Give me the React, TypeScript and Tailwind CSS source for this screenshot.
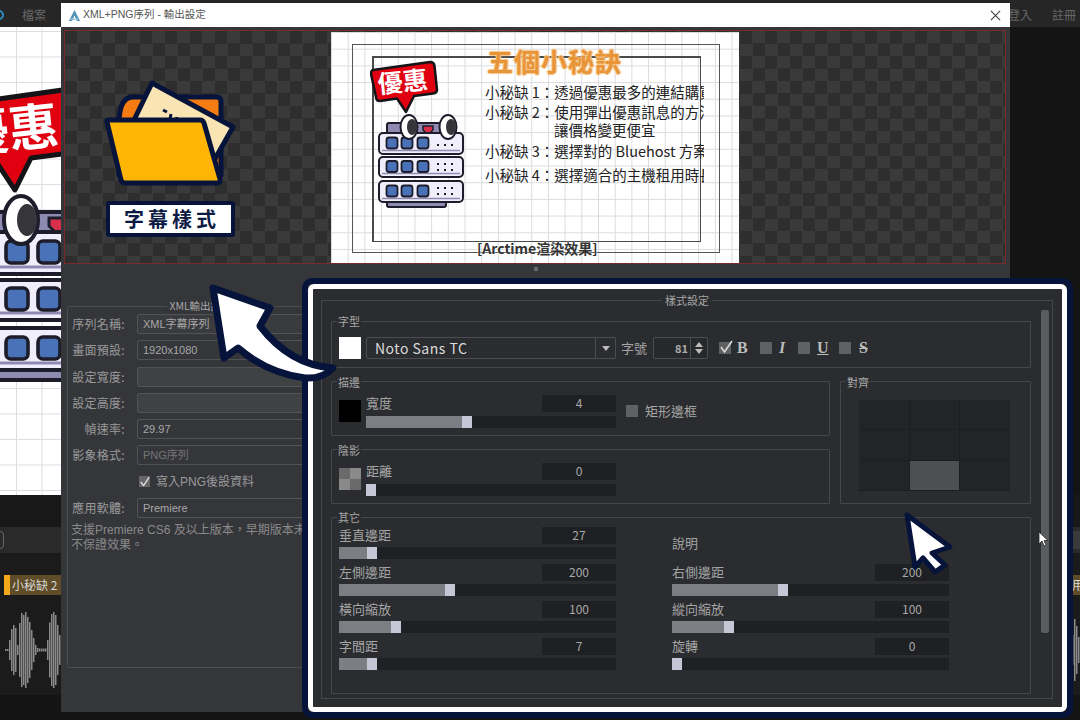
import React from "react";

const CJK = { fontFamily: '"Noto Sans CJK TC", "Noto Sans", sans-serif' };
const LATIN = { fontFamily: '"Liberation Sans", "Noto Sans CJK TC", sans-serif' };
const NAVY = "#06133a";

function Illustration({ className }: { className: string }) {
  const dark = "#1c1c2b";
  const rows = [
    { y: 73, h: 21 },
    { y: 97, h: 20 },
    { y: 121, h: 21 },
  ];
  return (
    <svg viewBox="0 0 100 150" className={className}>
      <path d="M3 10 L60 2 Q64 2 64.500 6 L67 30 Q67 33 63 33.500 L44 36 L36 52 L27 38.500 L10 41 Q6 41 6 37 L1 14 Q1 10 3 10 Z" fill="#e00010" stroke="#141418" strokeWidth="2.500" strokeLinejoin="round" />
      <text x="33" y="31" textAnchor="middle" fontSize="25" fontWeight="700" fill="#fff" transform="rotate(-6 33 24)" style={CJK}>優惠</text>
      <rect x="17" y="63" width="53" height="14" rx="2" fill="#8f8ab2" stroke={dark} strokeWidth="2" />
      <path d="M53 66 h10 v4 l-5 5 l-5 -5 z" fill="#d8304a" stroke={dark} strokeWidth="1.500" />
      <rect x="17" y="140" width="59" height="7" rx="2" fill="#8f8ab2" stroke={dark} strokeWidth="2" />
      {rows.map((r, i) => (
        <g key={r.y}>
          <rect x="9" y={r.y} width="84" height={r.h} rx="4" fill="#efeefa" stroke={dark} strokeWidth="2" />
          <path d={`M12 ${r.y + r.h - 3.5} H90`} stroke="#8f8ab2" strokeWidth="1.500" />
          {[22, 37, 53].map((x) => (
            <rect key={x} x={x - 5.5} y={r.y + r.h / 2 - 6} width="11" height="11" rx="2.500" fill="#4a72b8" stroke={dark} strokeWidth="1.800" />
          ))}
          {[68, 75, 82].map((x) => (
            <g key={x}>
              <rect x={x - 1} y={r.y + (i === 0 ? 11 : 6)} width="2" height="2" fill={dark} />
              {i > 0 && <rect x={x - 1} y={r.y + 12} width="2" height="2" fill={dark} />}
            </g>
          ))}
        </g>
      ))}
      {[39, 78].map((x) => (
        <g key={x}>
          <ellipse cx={x} cy="67" rx="8.500" ry="12" fill="#fff" stroke={dark} strokeWidth="2" />
          <ellipse cx={x + 3} cy="67" rx="5" ry="8" fill="#35353a" />
        </g>
      ))}
    </svg>
  );
}

function Waveform({ bars, className }: { bars: number[]; className: string }) {
  return (
    <svg viewBox={`0 0 ${bars.length * 2} 90`} className={className}>
      {bars.map((h, i) => (
        <rect key={i} x={i * 2} y={45 - h / 2} width="1.500" height={h} fill="#8a8a8a" />
      ))}
    </svg>
  );
}

function Background() {
  return (
    <div className="flex h-[720px] w-[1080px] flex-col bg-[#141414]" style={CJK}>
      <div className="flex h-[27px] shrink-0 items-center justify-between bg-[#262626] pt-[2px] text-[12px] text-[#666]">
        <div className="flex items-center">
          <span className="-ml-[3px] h-[10px] w-[7px] rounded-r-full border-2 border-[#2f86bf]" />
          <span className="ml-[18px]">檔案</span>
        </div>
        <div className="flex gap-[20px] pr-[4px]">
          <span>登入</span>
          <span>註冊</span>
        </div>
      </div>
      <div className="flex h-[468px] shrink-0">
        <div className="relative w-[62px] overflow-hidden bg-white bg-[linear-gradient(#dedee2_1px,transparent_1px),linear-gradient(90deg,#dedee2_1px,transparent_1px)] bg-[length:25.500px_25.500px] bg-[position:16px_4px]">
          <div className="absolute -left-[57px] top-[59px] h-[300px] w-[200px]">
            <Illustration className="h-full w-full" />
          </div>
        </div>
      </div>
      <div className="h-[32px] shrink-0 bg-[#181818]" />
      <div className="flex h-[26px] shrink-0 items-center justify-between bg-[#2a2a2a]">
        <span className="-ml-[6px] h-[18px] w-[10px] rounded border border-[#666]" />
        <span className="h-[18px] w-[8px] bg-[#3a3a3a]" />
      </div>
      <div className="flex h-[52px] shrink-0 items-end justify-between bg-[#1b1b1b] pb-[10px]">
        <div className="ml-[4px] flex h-[20px] w-[60px] items-center border-l-[6px] border-[#f4a81c] bg-[#5f4c28] pl-[2px] text-[12px] text-[#d8d8d8]">小秘缺 2</div>
        <div className="flex h-[20px] w-[8px] items-center overflow-hidden bg-[#5f4c28] text-[12px] text-[#d8d8d8]">用</div>
      </div>
      <div className="flex h-[90px] shrink-0 items-center justify-between bg-[#1b1b1b] pl-[5px]">
        <Waveform className="h-[90px] w-[56px] blur-[0.4px]" bars={[2, 2, 20, 42, 50, 44, 10, 54, 74, 70, 76, 66, 56, 40, 24, 10, 4, 3, 3, 3, 3, 20, 55, 72, 76, 70, 50, 30]} />
        <Waveform className="h-[90px] w-[8px] blur-[0.4px]" bars={[30, 62, 48, 26]} />
      </div>
    </div>
  );
}

function Slide() {
  const lines: [string, boolean][] = [
    ["小秘缺 1：透過優惠最多的連結購買", false],
    ["小秘缺 2：使用彈出優惠訊息的方法", false],
    ["讓價格變更便宜", true],
    ["小秘缺 3：選擇對的 Bluehost 方案", false],
    ["小秘缺 4：選擇適合的主機租用時長", false],
  ];
  const tops = ["mt-0", "mt-[4px]", "mt-[2px]", "mt-[5px]", "mt-[8px]"];
  return (
    <div className="relative flex h-[231px] w-[408px] bg-white bg-[linear-gradient(#dcdce0_1px,transparent_1px),linear-gradient(90deg,#dcdce0_1px,transparent_1px)] bg-[length:16.700px_16.700px]" style={CJK}>
      <div className="absolute left-[21px] top-[12px] h-[209px] w-[368px] border border-[#555]" />
      <div className="absolute left-[41px] top-[24px] h-[186px] w-[329px] border-l-2 border-t-2 border-b border-r border-[#4a4a4a]" />
      <Illustration className="relative ml-[39px] mt-[28px] h-[150px] w-[100px] shrink-0" />
      <div className="relative ml-[15px] flex w-[219px] flex-col overflow-hidden pt-[14px]">
        <div className="ml-[2px] text-[26px] leading-[30px] font-bold tracking-[1px] text-[#e8953a] [text-shadow:1px_0_1px_#f7c98d,-1px_0_1px_#f7c98d,0_1px_1px_#f7c98d,0_-1px_1px_#f7c98d]">五個小秘訣</div>
        <div className="mt-[8px] flex flex-col text-[14.500px] leading-[16px] whitespace-nowrap text-[#222]">
          {lines.map(([t, indent], i) => (
            <div key={t} className={`${tops[i]} ${indent ? "pl-[69px]" : ""}`}>{t}</div>
          ))}
        </div>
      </div>
      <div className="absolute bottom-[7px] left-[146px] text-[14px] leading-[15px] font-bold whitespace-nowrap text-[#333] [text-shadow:0_0_2px_#fff]">[Arctime渲染效果]</div>
    </div>
  );
}

function FolderBadge() {
  return (
    <div className="absolute left-[34px] top-[49px] flex w-[140px] flex-col items-center" style={CJK}>
      <svg viewBox="0 0 140 110" className="h-[110px] w-[140px]">
        <path d="M20 44 Q20 17 34 17 H118 Q122 17 122 22 V95 H20 Z" fill="#f57c13" stroke={NAVY} strokeWidth="5" strokeLinejoin="round" />
        <path d="M53 3 L134 47 L104 100 L35 40 Z" fill="#f9e4b4" stroke={NAVY} strokeWidth="5" strokeLinejoin="round" />
        <path d="M64 30 l4 2 M72 34 l-1 5 M78 37 l-1 6 M84 41 l-1 5" stroke={NAVY} strokeWidth="3" />
        <path d="M8 42 Q7 40 10 40 H101 Q104 40 105 43 L121 99 Q122 103 118 103 H26 Q23 103 22 100 Z" fill="#ffb406" stroke={NAVY} strokeWidth="5" strokeLinejoin="round" />
      </svg>
      <div className="ml-[2px] mt-[11px] flex h-[36px] w-[129px] items-center justify-center rounded-[3px] border-[4px] border-[#06133a] bg-white pl-[4px] text-[20px] font-bold tracking-[4px] text-[#0c1a44]">字幕樣式</div>
    </div>
  );
}

function FormRow({ label, value, tone }: { label: string; value: string; tone: "field" | "dark" | "num" | "dim" }) {
  const box = {
    field: "bg-[#35363a] text-[#a8a8a8] pl-[5px] text-[11px]",
    dark: "bg-[#3a3b3e] text-[#a8a8a8] pl-[5px] text-[11px]",
    num: "bg-[#3f4243] text-[#bdbdbd] justify-end pr-[2px] font-bold text-[10px]",
    dim: "bg-[#35363a] text-[#757575] pl-[5px] text-[11px]",
  }[tone];
  return (
    <div className="flex h-[20px] items-center gap-[12px]">
      <span className="w-[54px] text-right text-[12px] tracking-[0.300px] whitespace-nowrap text-[#9a9a9a]">{label}</span>
      <div className={`flex h-[20px] flex-1 items-center rounded-[2px] border border-[#525356] ${box}`} style={LATIN}>{value}</div>
    </div>
  );
}

function Dialog() {
  return (
    <div className="absolute left-[61px] top-[3px] flex h-[709px] w-[949px] flex-col bg-[#35363a]" style={CJK}>
      <div className="flex h-[24px] shrink-0 items-center justify-between bg-white pl-[7px] pr-[9px]">
        <div className="flex items-center gap-[2px] text-[10.500px] text-[#555]" style={LATIN}>
          <svg viewBox="0 0 14 14" className="h-[13px] w-[13px]">
            <path d="M7 1 L13 13 H9.500 L7 7 L4.500 13 H1 Z" fill="#4f93b8" />
            <path d="M3 11 H11" stroke="#9ccbe0" strokeWidth="1.500" />
          </svg>
          <span>XML+PNG序列 - 輸出設定</span>
        </div>
        <svg viewBox="0 0 12 12" className="h-[11px] w-[11px]">
          <path d="M1 1 L11 11 M11 1 L1 11" stroke="#444" strokeWidth="1.300" />
        </svg>
      </div>
      <div className="relative ml-[3px] mt-[3px] flex h-[234px] w-[942px] shrink-0 justify-center border border-[#7a2a2a] bg-[#333] bg-[repeating-conic-gradient(#3a3a3a_0_25%,#2e2e2e_0_50%)] bg-[length:25px_25px] pt-px">
        <Slide />
        <FolderBadge />
      </div>
      <div className="mt-[3px] flex h-[4px] shrink-0 justify-center">
        <span className="h-[4px] w-[4px] bg-[#666]" />
      </div>
      <fieldset className="ml-[6px] mt-[28px] h-[369px] w-[270px] shrink-0 rounded-[2px] border border-[#4c4d50] pl-[3px] pr-[6px]">
        <legend className="mx-auto px-[2px] text-[10.500px] leading-[14px] text-[#a8a8a8]">XML輸出設定</legend>
        <div className="flex flex-col gap-[6.300px] pt-px">
          <FormRow label="序列名稱:" value="XML字幕序列" tone="dark" />
          <FormRow label="畫面預設:" value="1920x1080" tone="field" />
          <FormRow label="設定寬度:" value="1,920" tone="num" />
          <FormRow label="設定高度:" value="1,080" tone="num" />
          <FormRow label="幀速率:" value="29.97" tone="field" />
          <FormRow label="影象格式:" value="PNG序列" tone="dim" />
          <div className="flex h-[20px] items-center pl-[68px] text-[12px] text-[#9a9a9a]" style={LATIN}>
            <span className="mr-[6px] flex h-[11px] w-[11px] items-center justify-center bg-[#666]">
              <svg viewBox="0 0 12 12" className="h-[12px] w-[12px]"><path d="M2 6 L5 10 L11 1" fill="none" stroke="#ddd" strokeWidth="1.500" /></svg>
            </span>
            寫入PNG後設資料
          </div>
          <FormRow label="應用軟體:" value="Premiere" tone="field" />
        </div>
        <p className="mt-[5px] text-[12px] leading-[15px] whitespace-nowrap text-[#8a8a8a]" style={LATIN}>
          支援Premiere CS6 及以上版本，早期版本未
          <br />
          不保證效果。
        </p>
      </fieldset>
    </div>
  );
}

function Slider({ thumb, className = "" }: { thumb: number; className?: string }) {
  return (
    <div className={`flex h-[12px] bg-[#1f2023] ${className}`}>
      <div className="h-full bg-[#7d7e84]" style={{ width: thumb }} />
      <div className="h-full w-[9.500px] bg-[#c5c6d6]" />
    </div>
  );
}

function ValueBox({ value }: { value: string }) {
  return <span className="flex h-[17px] w-[74px] items-center justify-center bg-[#1f2023] pb-px text-[12px] text-[#a8a8a8]">{value}</span>;
}

function ValueRow({ label, value, thumb }: { label: string; value: string; thumb: number }) {
  return (
    <div className="flex h-[32px] flex-col">
      <div className="flex h-[17px] items-center justify-between">
        <span className="pb-[2px] text-[13px] text-[#a5a5a5]">{label}</span>
        <ValueBox value={value} />
      </div>
      <Slider thumb={thumb} className="mt-[3px]" />
    </div>
  );
}

function Swatch({ children, className }: { children?: React.ReactNode; className: string }) {
  return <div className={`h-[22px] w-[22px] shrink-0 ${className}`}>{children}</div>;
}

function SoloRow({ label, value, thumb }: { label: string; value: string; thumb: number }) {
  return (
    <div className="w-[250px]">
      <div className="flex h-[17px] items-center justify-between">
        <span className="text-[13px] text-[#a5a5a5]">{label}</span>
        <ValueBox value={value} />
      </div>
      <Slider thumb={thumb} className="mt-[4px]" />
    </div>
  );
}

function Group({ title, className, children }: { title: string; className: string; children: React.ReactNode }) {
  return (
    <fieldset className={`rounded-[1px] border border-[#45484b] px-[7px] ${className}`}>
      <legend className="-ml-[2px] px-px text-[11px] leading-[14px] text-[#a5a5a5]">{title}</legend>
      {children}
    </fieldset>
  );
}

function Check({ checked }: { checked?: boolean }) {
  return (
    <span className="relative flex h-[12px] w-[12px] shrink-0 items-center justify-center bg-[#5f6062]">
      {checked && (
        <svg viewBox="0 0 14 14" className="absolute -top-[2px] left-0 h-[14px] w-[14px]">
          <path d="M2 7 L5.500 12 L13 1" fill="none" stroke="#e0e0e0" strokeWidth="1.500" />
        </svg>
      )}
    </span>
  );
}

function Panel() {
  const serif = { fontFamily: '"Liberation Serif", serif' };
  return (
    <div className="absolute left-[302px] top-[278px] h-[440px] w-[771px] rounded-[10px] border-[6px] border-[#06133a]" style={CJK}>
      <div className="h-full w-full rounded-[6px] border-[5px] border-white bg-[#2a2c2f] pl-[8px] pr-[10px] pt-[4px]">
        <fieldset className="h-[406px] border border-[#45484b] pl-[9px] pr-[3px]">
          <legend className="ml-[331px] px-[3px] text-[11px] leading-[14px] text-[#a5a5a5]">樣式設定</legend>
          <div className="flex pt-[7px]">
            <div className="flex w-[700px] shrink-0 flex-col gap-[6.500px]">
              <Group title="字型" className="h-[54px]">
                <div className="flex items-center pt-[8px]">
                  <Swatch className="bg-white" />
                  <div className="ml-[5px] flex h-[22px] w-[250px] items-center justify-between rounded-[2px] border border-[#4b4d50] pl-[8px] text-[14px] tracking-[0.500px] text-[#dcdcdc]">
                    Noto Sans TC
                    <span className="flex h-full w-[20px] items-center justify-center border-l border-[#4b4d50]">
                      <span className="h-0 w-0 border-x-[4px] border-t-[5px] border-x-transparent border-t-[#bbb]" />
                    </span>
                  </div>
                  <span className="ml-[5px] text-[13px] text-[#a5a5a5]">字號</span>
                  <div className="ml-[6px] flex h-[22px] w-[55px] items-center rounded-[2px] border border-[#4b4d50] bg-[#26282a] text-[11px] font-bold text-[#aaa]">
                    <span className="w-[34px] text-right">81</span>
                    <span className="ml-[2px] flex h-full flex-1 flex-col items-center justify-center gap-[2px] border-l border-[#4b4d50]">
                      <span className="h-0 w-0 border-x-[4px] border-b-[5px] border-x-transparent border-b-[#bbb]" />
                      <span className="h-0 w-0 border-x-[4px] border-t-[5px] border-x-transparent border-t-[#bbb]" />
                    </span>
                  </div>
                  <div className="ml-[11px] flex items-center text-[16px] font-bold text-[#bdbdbd]" style={serif}>
                    <Check checked />
                    <span className="ml-[6px] w-[23px]">B</span>
                    <Check />
                    <span className="ml-[7px] w-[19px] italic">I</span>
                    <Check />
                    <span className="ml-[7px] w-[22px] underline">U</span>
                    <Check />
                    <span className="ml-[8px] line-through">S</span>
                  </div>
                </div>
              </Group>
              <div className="flex gap-[10px]">
                <div className="flex w-[499px] shrink-0 flex-col gap-[7px]">
                  <Group title="描邊" className="h-[61px]">
                    <div className="flex items-start pt-[6px]">
                      <Swatch className="mt-[5px] bg-black" />
                      <div className="ml-[5px]"><SoloRow label="寬度" value="4" thumb={96} /></div>
                      <div className="ml-[10px] mt-[10px]"><Check /></div>
                      <span className="ml-[7px] mt-[7px] text-[13px] leading-[18px] text-[#a5a5a5]">矩形邊框</span>
                    </div>
                  </Group>
                  <Group title="陰影" className="h-[61px]">
                    <div className="flex items-start pt-[6px]">
                      <Swatch className="mt-[5px] grid grid-cols-2 grid-rows-2">
                        <span className="bg-[#6a6a6a]" />
                        <span className="bg-[#8a8a8a]" />
                        <span className="bg-[#8a8a8a]" />
                        <span className="bg-[#6a6a6a]" />
                      </Swatch>
                      <div className="ml-[5px]"><SoloRow label="距離" value="0" thumb={0} /></div>
                    </div>
                  </Group>
                </div>
                <Group title="對齊" className="h-[129px] w-[191px]">
                  <div className="ml-[11px] mt-[11px] grid h-[91px] w-[151px] grid-cols-3 grid-rows-3 gap-px bg-[#1d1e20]">
                    {[0, 1, 2, 3, 4, 5, 6, 7, 8].map((i) => (
                      <span key={i} className={i === 7 ? "bg-[#4d5053]" : "bg-[#232427]"} />
                    ))}
                  </div>
                </Group>
              </div>
              <Group title="其它" className="h-[184px]">
                <div className="grid w-[610px] grid-cols-[277px_277px] gap-x-[56px] gap-y-[5px] pt-[3px]">
                  <ValueRow label="垂直邊距" value="27" thumb={28} />
                  <div className="flex h-[32px] items-center text-[13px] text-[#a5a5a5]">說明</div>
                  <ValueRow label="左側邊距" value="200" thumb={106} />
                  <ValueRow label="右側邊距" value="200" thumb={106} />
                  <ValueRow label="橫向縮放" value="100" thumb={52} />
                  <ValueRow label="縱向縮放" value="100" thumb={52} />
                  <ValueRow label="字間距" value="7" thumb={28} />
                  <ValueRow label="旋轉" value="0" thumb={0} />
                </div>
              </Group>
            </div>
            <div className="-mt-[4px] ml-[10px] h-[323px] w-[8px] rounded-[2px] bg-[#5b5c5e]" />
          </div>
        </fieldset>
      </div>
    </div>
  );
}

function Annotations() {
  return (
    <>
      <svg viewBox="0 0 140 100" className="absolute left-[205px] top-[283px] h-[100px] w-[140px]">
        <path d="M8 5 L65 25 L55 43 Q85 82 128 85 Q118 96 100 95 Q62 90 33 65 L19 75 Z" fill="#fff" stroke={NAVY} strokeWidth="7" strokeLinejoin="round" />
      </svg>
      <svg viewBox="0 0 60 70" className="absolute left-[900px] top-[508px] h-[70px] w-[60px]">
        <path d="M7 7 L50 39 L32 45 L45 57 L35 64 L23 50 L15 59 Z" fill="#fff" stroke={NAVY} strokeWidth="5" strokeLinejoin="round" />
      </svg>
      <svg viewBox="0 0 12 16" className="absolute left-[1038px] top-[531px] h-[16px] w-[12px]">
        <path d="M1 1 V13 L4 10 L6 15 L8 14 L6 9.500 H10 Z" fill="#fff" stroke="#222" strokeWidth="0.800" />
      </svg>
    </>
  );
}

export default function App() {
  return (
    <div className="relative h-[720px] w-[1080px] overflow-hidden bg-[#141414]">
      <Background />
      <Dialog />
      <Panel />
      <Annotations />
    </div>
  );
}
